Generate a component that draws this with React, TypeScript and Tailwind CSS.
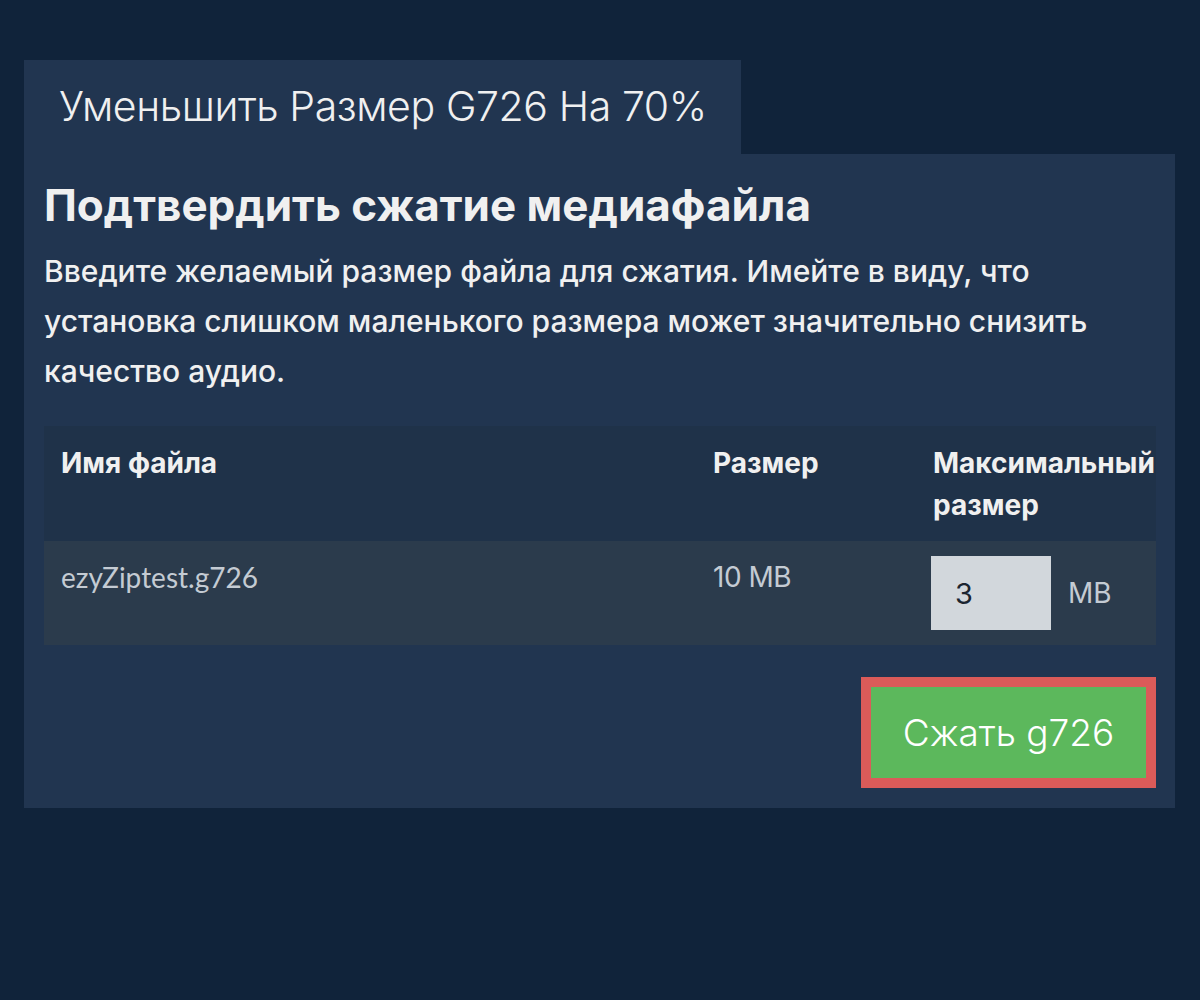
export default function App() {
  return (
    <div className="min-h-screen bg-[#10233a] pt-[60px] pl-6 font-['Inter',sans-serif] text-[#f0f0f0]">
      <div className="w-[1151px]">
        {/* tab */}
        <div className="inline-flex h-[94px] items-center bg-[#213550] pl-[35px] pr-[34px]">
          <span className="text-[41px] font-light tracking-[-0.4px]">Уменьшить Размер G726 На 70%</span>
        </div>

        {/* panel */}
        <div className="bg-[#213550] pl-5 pr-[19px] pt-[26px] pb-5">
          <h1 className="text-[44px] font-bold leading-[50px]">Подтвердить сжатие медиафайла</h1>
          <p className="mt-4 text-[30px] font-medium leading-[50px]">
            Введите желаемый размер файла для сжатия. Имейте в виду, что установка слишком маленького размера может
            значительно снизить качество аудио.
          </p>

          <table className="mt-[30px] w-full table-fixed border-collapse text-left">
            <thead>
              <tr className="bg-[#1f3249] align-top">
                <th className="w-[652px] px-[17px] pt-4 pb-[15px] text-[28px] font-bold leading-[42px]">Имя файла</th>
                <th className="w-[220px] px-[17px] pt-4 pb-[15px] text-[28px] font-bold leading-[42px]">Размер</th>
                <th className="px-[17px] pt-4 pb-[15px] text-[28px] font-bold leading-[42px]">Максимальный размер</th>
              </tr>
            </thead>
            <tbody>
              <tr className="bg-[#2b3b4c] align-top">
                <td className="px-[17px] py-[15px] font-['Lato',sans-serif] text-[28px] leading-[42px] text-[#c4cbd3]">
                  ezyZiptest.g726
                </td>
                <td className="px-[17px] py-[15px] text-[28px] leading-[42px] tracking-[-0.5px] text-[#c4cbd3]">10 MB</td>
                <td className="px-[15px] py-[15px]">
                  <div className="flex items-center gap-[17px]">
                    <input
                      defaultValue="3"
                      className="h-[74px] w-[120px] bg-[#d2d7dc] pl-6 text-[29px] text-[#1b2530] outline-none"
                    />
                    <span className="text-[28px] text-[#c4cbd3]">MB</span>
                  </div>
                </td>
              </tr>
            </tbody>
          </table>

          <div className="mt-8 flex justify-end">
            <button className="h-[111px] w-[295px] border-[10px] border-[#db5b59] bg-[#5cb85c] text-[37px] font-light text-white">
              Сжать g726
            </button>
          </div>
        </div>
      </div>
    </div>
  );
}
